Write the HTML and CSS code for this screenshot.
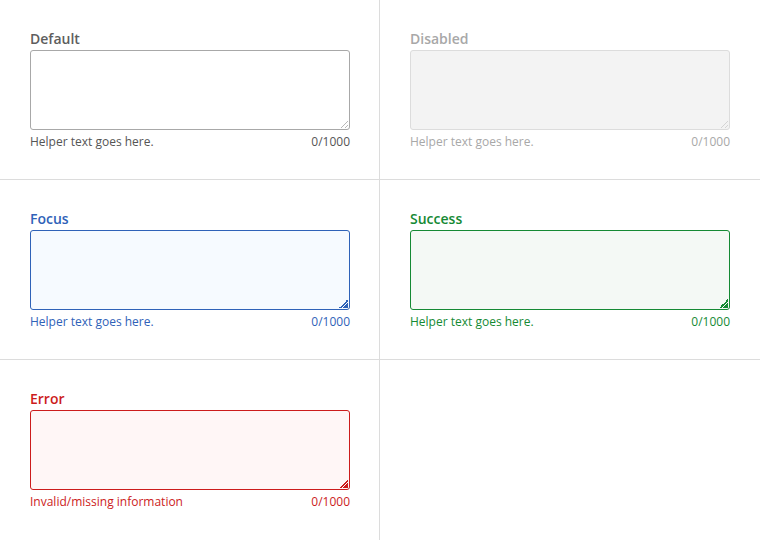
FILE: index.html
```html
<!DOCTYPE html>
<html>
<head>
<meta charset="utf-8">
<link rel="stylesheet" href="styles.css">
</head>
<body>
<div class="grid">
  <div class="cell">
    <label class="label">Default</label>
    <div class="field">
      <textarea class="input"></textarea>
      <span class="grip grip-default"></span>
    </div>
    <div class="helper"><span>Helper text goes here.</span><span>0/1000</span></div>
  </div>
  <div class="cell disabled">
    <label class="label">Disabled</label>
    <div class="field">
      <textarea class="input" disabled></textarea>
      <span class="grip grip-default"></span>
    </div>
    <div class="helper"><span>Helper text goes here.</span><span>0/1000</span></div>
  </div>
  <div class="cell focus">
    <label class="label">Focus</label>
    <div class="field">
      <textarea class="input"></textarea>
      <span class="grip grip-color"></span>
    </div>
    <div class="helper"><span>Helper text goes here.</span><span>0/1000</span></div>
  </div>
  <div class="cell success">
    <label class="label">Success</label>
    <div class="field">
      <textarea class="input"></textarea>
      <span class="grip grip-color"></span>
    </div>
    <div class="helper"><span>Helper text goes here.</span><span>0/1000</span></div>
  </div>
  <div class="cell error">
    <label class="label">Error</label>
    <div class="field">
      <textarea class="input"></textarea>
      <span class="grip grip-color"></span>
    </div>
    <div class="helper"><span>Invalid/missing information</span><span>0/1000</span></div>
  </div>
  <div class="cell"></div>
</div>
</body>
</html>
```
FILE: styles.css
```css
html, body {
  margin: 0;
  padding: 0;
  background: #fff;
}
body {
  font-family: "Open Sans", "Noto Sans", sans-serif;
}
.grid {
  display: grid;
  grid-template-columns: 380px 380px;
  grid-template-rows: 180px 180px 180px;
  width: 760px;
}
.cell {
  box-sizing: border-box;
  padding: 30px 30px 0 30px;
  display: flex;
  flex-direction: column;
  --c: #5e5e5e;
  --border: #a8a8a8;
  --bg: #fff;
  --helper: #555;
}
.cell:nth-child(odd) {
  border-right: 1px solid #dcdcdc;
}
.cell:nth-child(-n+4) {
  border-bottom: 1px solid #dcdcdc;
}
.label {
  display: block;
  font-size: 14px;
  font-weight: 600;
  line-height: 18px;
  color: var(--c);
  margin-bottom: 2px;
}
.field {
  position: relative;
  width: 320px;
  height: 80px;
}
.input {
  box-sizing: border-box;
  display: block;
  width: 320px;
  height: 80px;
  margin: 0;
  border: 1px solid var(--border);
  border-radius: 3px;
  background: var(--bg);
  resize: none;
  outline: none;
  font-family: inherit;
}
.grip {
  position: absolute;
  right: 2px;
  bottom: 2px;
  width: 9px;
  height: 9px;
}
.grip-default {
  background: linear-gradient(135deg, transparent 0 58%, #b8b8b8 58% 66%, transparent 66% 78%, #b8b8b8 78% 86%, transparent 86%);
}
.disabled .grip-default {
  background: linear-gradient(135deg, transparent 0 58%, #d4d4d4 58% 66%, transparent 66% 78%, #d4d4d4 78% 86%, transparent 86%);
}
.grip-color {
  background: linear-gradient(135deg, transparent 0 50%, var(--c) 50% 62%, transparent 62% 70%, var(--c) 70%);
}
.helper {
  display: flex;
  justify-content: space-between;
  width: 320px;
  margin-top: 4px;
  font-size: 12px;
  line-height: 16px;
  color: var(--helper);
}
.disabled {
  --c: #a8a8a8;
  --border: #dcdcdc;
  --bg: #f3f3f3;
  --helper: #a8a8a8;
}
.focus {
  --c: #2f62b8;
  --border: #2f62b8;
  --bg: #f6faff;
  --helper: #2f62b8;
}
.success {
  --c: #158a34;
  --border: #158a34;
  --bg: #f4f9f5;
  --helper: #158a34;
}
.error {
  --c: #cc1c1c;
  --border: #cc1c1c;
  --bg: #fff6f6;
  --helper: #cc1c1c;
}
```
